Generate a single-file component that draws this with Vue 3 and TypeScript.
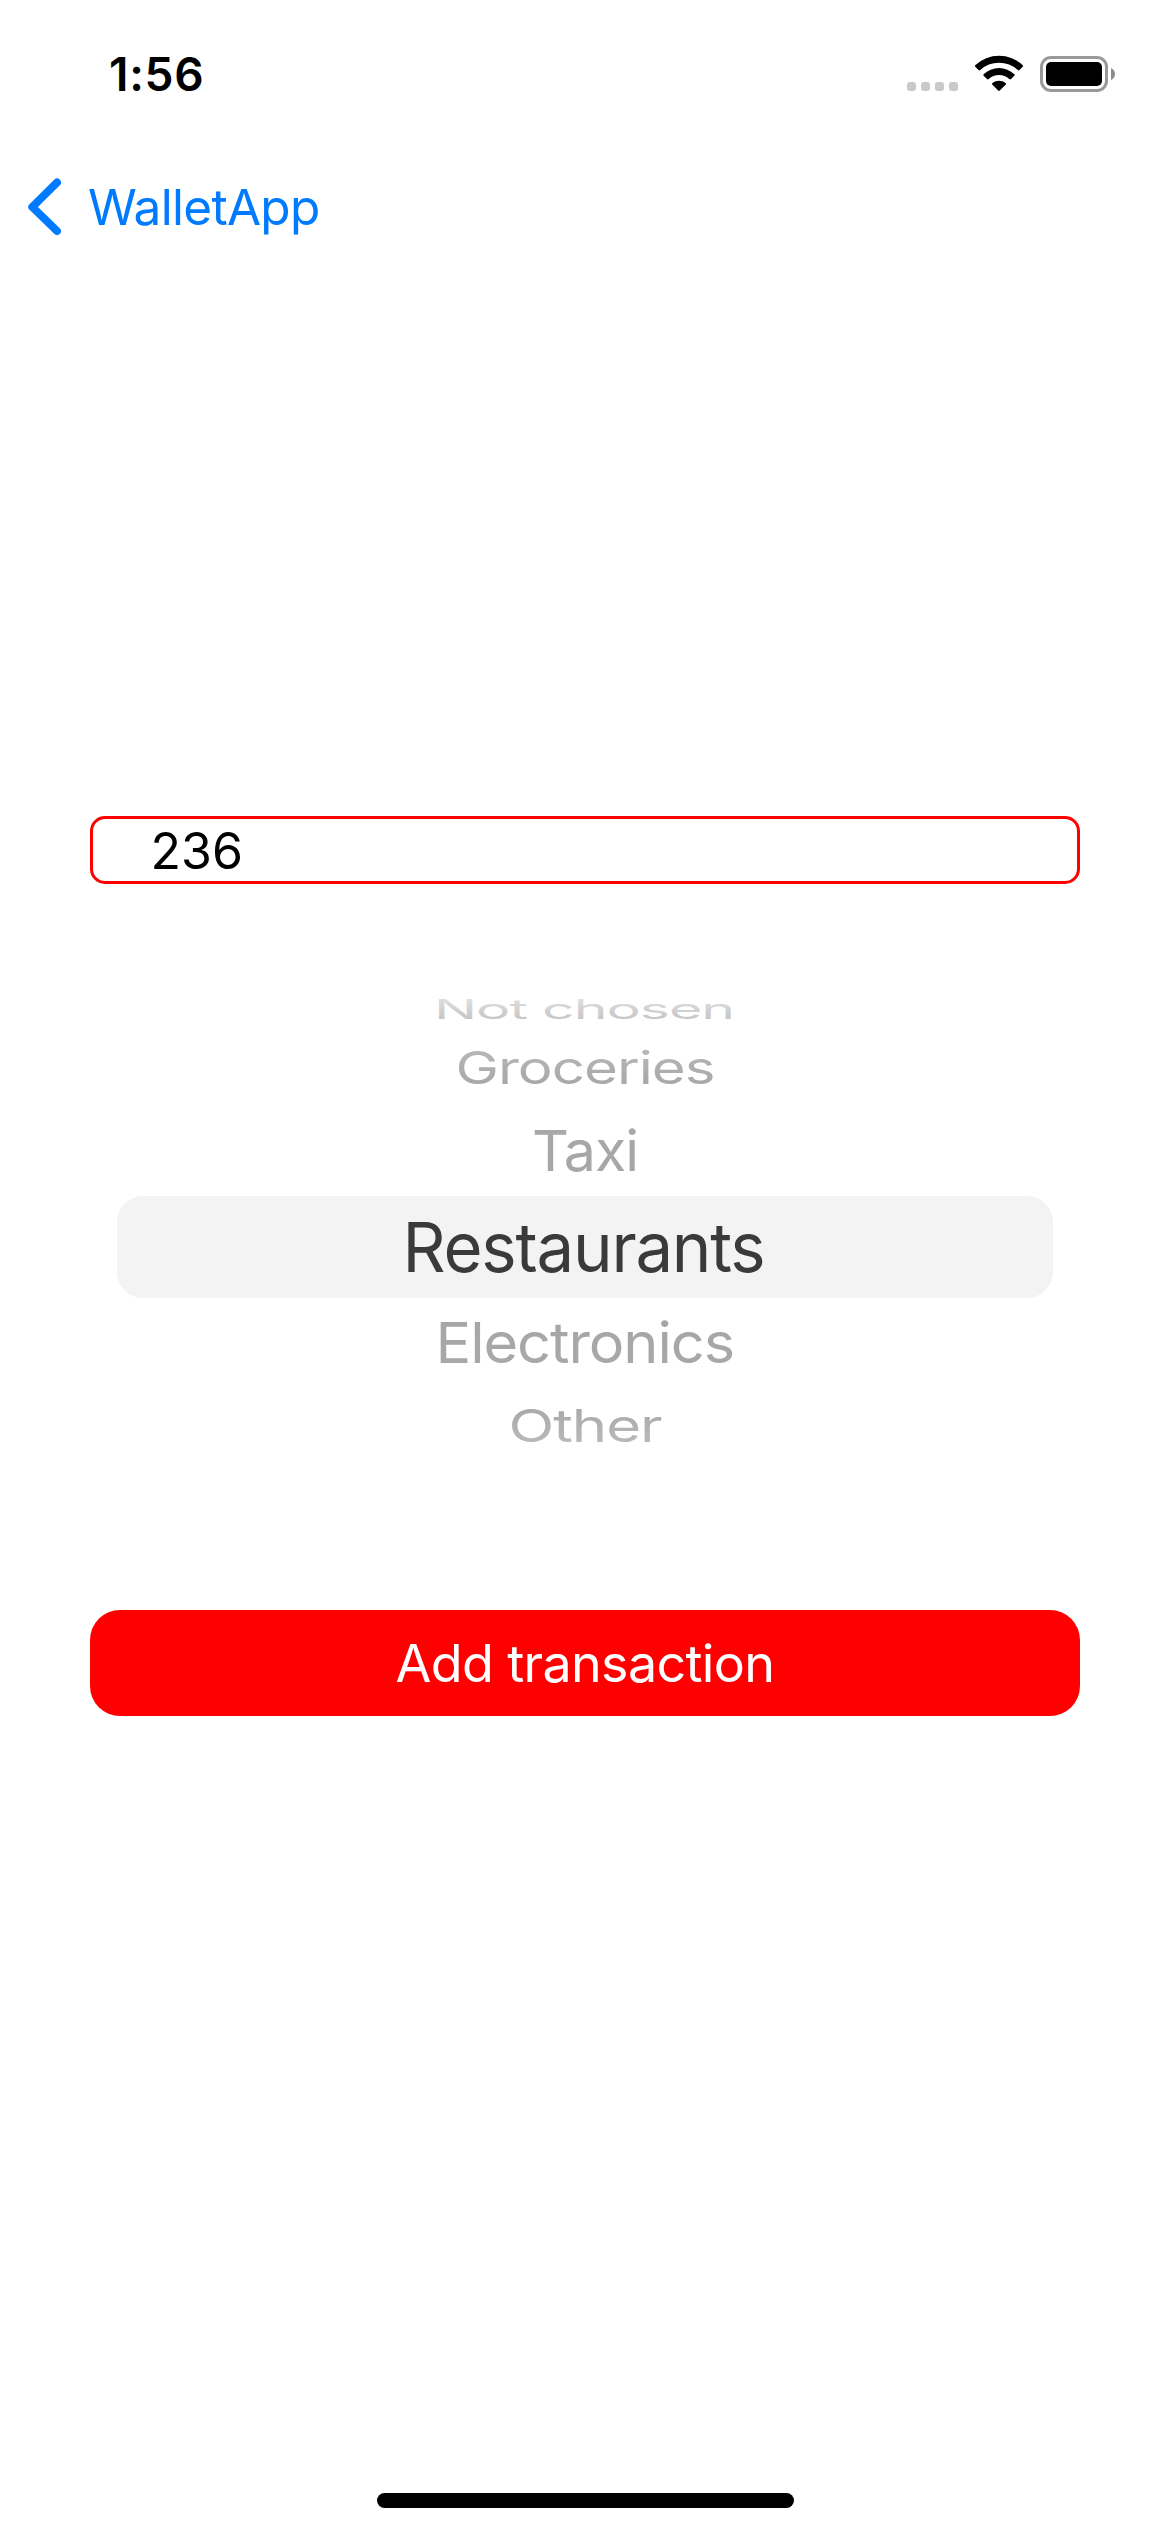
<script setup lang="ts">
interface WheelRow {
  label: string
  height: number
  left: number
  length: number
  baseline: number
  squash: number
  from: string
  to: string
}

const amount = '236'

// Rows get flatter and paler as they turn away from the selected one.
const rows: WheelRow[] = [
  { label: 'Not chosen', height: 44, left: 317, length: 300, baseline: 29, squash: 0.4, from: '#e0e0e0', to: '#c6c6c6' },
  { label: 'Groceries', height: 66, left: 338.5, length: 259, baseline: 50, squash: 0.665, from: '#b8b8b8', to: '#a8a8a8' },
  { label: 'Taxi', height: 96, left: 415, length: 106, baseline: 71.3, squash: 0.835, from: '#a8a8a8', to: '#a6a6a6' },
  { label: 'Restaurants', height: 102, left: 285.5, length: 362, baseline: 76, squash: 1.01, from: '#3a3a3a', to: '#3a3a3a' },
  { label: 'Electronics', height: 90, left: 318.5, length: 298.5, baseline: 65.3, squash: 0.835, from: '#a6a6a6', to: '#a8a8a8' },
  { label: 'Other', height: 80, left: 391.5, length: 153, baseline: 53.5, squash: 0.665, from: '#a8a8a8', to: '#b8b8b8' },
]
const selected = 3
</script>

<template>
  <main class="screen">
    <header class="status">
      <span class="time">1:56</span>
      <svg class="indicators" width="210" height="40" viewBox="906 54 210 40">
        <g fill="#c9c9c9">
          <rect x="907" y="82" width="9" height="9" rx="3" />
          <rect x="921" y="82" width="9" height="9" rx="3" />
          <rect x="935" y="82" width="9" height="9" rx="3" />
          <rect x="949" y="82" width="9" height="9" rx="3" />
        </g>
        <path d="M975.2 65.2Q974.6 66 975.3 66.8L978.5 70.1Q979.3 70.9 980.2 70.1A27.5 27.5 0 0 1 1017.800 70.1Q1018.700 70.9 1019.500 70.1L1022.700 66.8Q1023.400 66 1022.800 65.2A34.500 34.500 0 0 0 975.2 65.2Z" />
        <path d="M983.600 74.200Q982.900 75 983.700 75.800L987 79Q987.800 79.800 988.700 79A15.600 15.600 0 0 1 1009.300 79Q1010.200 79.800 1011 79L1014.300 75.800Q1015.100 75 1014.400 74.200A22.500 22.500 0 0 0 983.600 74.200Z" />
        <path d="M992.400 83Q991.500 83.900 992.400 84.800L998.200 90.600Q999 91.300 999.800 90.600L1005.600 84.800Q1006.500 83.900 1005.600 83A10.500 10.500 0 0 0 992.400 83Z" />
        <rect x="1041.500" y="57.500" width="65" height="33" rx="9.500" fill="none" stroke="#999" stroke-width="3" />
        <rect x="1046" y="62" width="56" height="24" rx="5" />
        <path d="M1111 68Q1115 70 1115 74T1111 80Z" fill="#8c8c8c" />
      </svg>
    </header>

    <nav class="nav">
      <svg width="40" height="64" viewBox="24 175 40 64">
        <path d="M57 182.500L32.300 207L57 231" fill="none" stroke="#007aff" stroke-width="8" stroke-linecap="round" stroke-linejoin="round" />
      </svg>
      <span class="back">WalletApp</span>
    </nav>

    <section class="form">
      <div class="field"><span class="amount">{{ amount }}</span></div>

      <div class="wheel">
        <svg
          v-for="(row, i) in rows"
          :key="row.label"
          class="row"
          :class="{ selected: i === selected }"
          width="936"
          :height="row.height"
        >
          <defs>
            <linearGradient :id="'fade' + i" x1="0" y1="0.15" x2="0" y2="0.8">
              <stop offset="0" :stop-color="row.from" />
              <stop offset="1" :stop-color="row.to" />
            </linearGradient>
          </defs>
          <text
            :transform="`translate(${row.left} ${row.baseline}) scale(1 ${row.squash})`"
            :textLength="row.length"
            lengthAdjust="spacingAndGlyphs"
            :fill="`url(#fade${i})`"
          >{{ row.label }}</text>
        </svg>
      </div>

      <button class="submit"><span class="submit-label">Add transaction</span></button>
    </section>

    <div class="home"></div>
  </main>
</template>

<style>
body {
  margin: 0;
  background: #fff;
}
</style>

<style scoped>
.screen {
  display: flex;
  flex-direction: column;
  width: 1170px;
  height: 2532px;
  overflow: hidden;
  background: #fff;
  font-family: Inter, 'Liberation Sans', sans-serif;
  color: #000;
}
.status {
  display: flex;
  justify-content: space-between;
  align-items: flex-start;
  height: 141px;
  padding: 0 54px 0 109px;
  box-sizing: border-box;
}
.time {
  margin-top: 46px;
  font-size: 46px;
  line-height: 56px;
  font-weight: 600;
  letter-spacing: 0.7px;
}
.indicators {
  margin-top: 54px;
}
.nav {
  display: flex;
  align-items: center;
  height: 132px;
  padding-left: 24px;
}
.back {
  margin-left: 24px;
  font-size: 49.5px;
  line-height: 60px;
  letter-spacing: -0.7px;
  color: #007aff;
}
.form {
  display: flex;
  flex-direction: column;
  margin: 543px 90px 0;
}
.field {
  display: flex;
  align-items: center;
  height: 68px;
  box-sizing: border-box;
  padding: 1px 0 0 57.500px;
  border: 3px solid #f00;
  border-radius: 15px;
}
.amount {
  font-size: 50px;
  line-height: 60px;
}
.wheel {
  display: flex;
  flex-direction: column;
  align-items: center;
  height: 620px;
  margin-top: 106px;
}
.row {
  flex: none;
  display: block;
  font-size: 68px;
  letter-spacing: -1.2px;
}
.selected {
  background: #f3f3f3;
  border-radius: 26px;
}
.submit {
  display: flex;
  justify-content: center;
  align-items: center;
  height: 106px;
  padding: 1px 0 0;
  border: 0;
  border-radius: 30px;
  background: #f00;
  color: #fff;
  font: 400 52px/64px Inter, 'Liberation Sans', sans-serif;
  letter-spacing: -0.65px;
}
.home {
  width: 417px;
  height: 15px;
  margin: auto auto 24px;
  border-radius: 8px;
  background: #000;
}
</style>
